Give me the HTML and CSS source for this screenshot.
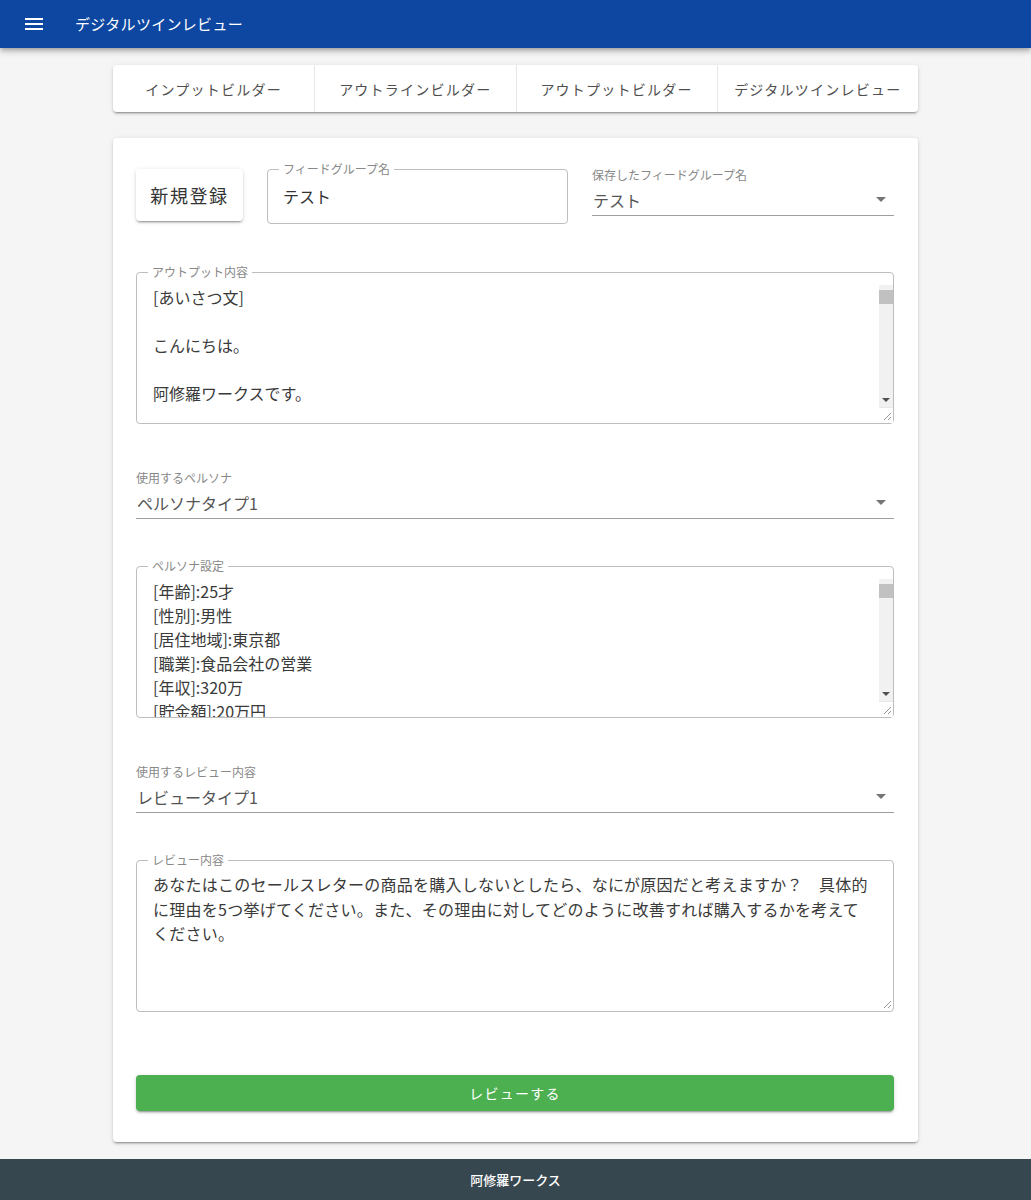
FILE: index.html
```html
<!DOCTYPE html>
<html lang="ja">
<head>
<meta charset="utf-8">
<title>デジタルツインレビュー</title>
<link rel="stylesheet" href="styles.css">
</head>
<body>
<header class="appbar">
  <span class="menu-icon">
    <svg width="18" height="12" viewBox="0 0 18 12"><rect x="0" y="0" width="18" height="2"/><rect x="0" y="5" width="18" height="2"/><rect x="0" y="10" width="18" height="2"/></svg>
  </span>
  <span class="app-title">デジタルツインレビュー</span>
</header>

<main class="page">
  <nav class="tabs">
    <a class="tab">インプットビルダー</a>
    <a class="tab">アウトラインビルダー</a>
    <a class="tab">アウトプットビルダー</a>
    <a class="tab">デジタルツインレビュー</a>
  </nav>

  <section class="card">
    <div class="row-top">
      <button class="btn-new">新規登録</button>
      <div class="outlined field-name">
        <span class="olabel">フィードグループ名</span>
        <span class="ovalue">テスト</span>
      </div>
      <div class="select select-top">
        <span class="slabel">保存したフィードグループ名</span>
        <div class="svalue"><span>テスト</span><i class="caret"></i></div>
      </div>
    </div>

    <div class="outlined area">
      <span class="olabel">アウトプット内容</span>
      <textarea class="area-text" readonly>[あいさつ文]

こんにちは。

阿修羅ワークスです。

本日はお忙しいところ、
ありがとうございます。</textarea>
      <div class="fake-scroll">
        <span class="sb-gap"></span>
        <span class="sb-thumb"></span>
        <span class="sb-fill"></span>
        <span class="sb-down"><i class="sb-arrow"></i></span>
        <span class="sb-resizer"><svg width="10" height="10" viewBox="0 0 10 10"><path d="M9 2 L2 9 M9 6 L6 9" stroke="#999" stroke-width="1" fill="none"/></svg></span>
      </div>
    </div>

    <div class="select select-gap">
      <span class="slabel">使用するペルソナ</span>
      <div class="svalue"><span>ペルソナタイプ1</span><i class="caret"></i></div>
    </div>

    <div class="outlined area">
      <span class="olabel">ペルソナ設定</span>
      <textarea class="area-text" readonly>[年齢]:25才
[性別]:男性
[居住地域]:東京都
[職業]:食品会社の営業
[年収]:320万
[貯金額]:20万円
[趣味]:映画鑑賞
[家族構成]:一人暮らし</textarea>
      <div class="fake-scroll">
        <span class="sb-gap"></span>
        <span class="sb-thumb"></span>
        <span class="sb-fill"></span>
        <span class="sb-down"><i class="sb-arrow"></i></span>
        <span class="sb-resizer"><svg width="10" height="10" viewBox="0 0 10 10"><path d="M9 2 L2 9 M9 6 L6 9" stroke="#999" stroke-width="1" fill="none"/></svg></span>
      </div>
    </div>

    <div class="select select-gap">
      <span class="slabel">使用するレビュー内容</span>
      <div class="svalue"><span>レビュータイプ1</span><i class="caret"></i></div>
    </div>

    <div class="outlined area">
      <span class="olabel">レビュー内容</span>
      <textarea class="area-text review-text" readonly>あなたはこのセールスレターの商品を購入しないとしたら、なにが原因だと考えますか？　具体的
に理由を5つ挙げてください。また、その理由に対してどのように改善すれば購入するかを考えて
ください。</textarea>
      <span class="corner-resizer"><svg width="10" height="10" viewBox="0 0 10 10"><path d="M9 2 L2 9 M9 6 L6 9" stroke="#999" stroke-width="1" fill="none"/></svg></span>
    </div>

    <button class="btn-review">レビューする</button>
  </section>
</main>

<footer class="footer">阿修羅ワークス</footer>
</body>
</html>
```

FILE: styles.css
```css
* { box-sizing: border-box; }

html, body {
  margin: 0;
  padding: 0;
}

body {
  background: #f5f5f5;
  font-family: "Noto Sans CJK JP", "Noto Sans", sans-serif;
  color: #333;
}

/* ---------- app bar ---------- */
.appbar {
  height: 48px;
  background: #0d47a1;
  display: flex;
  align-items: center;
  padding-left: 25px;
  box-shadow: 0 2px 4px -1px rgba(0,0,0,.2), 0 4px 5px 0 rgba(0,0,0,.14), 0 1px 10px 0 rgba(0,0,0,.12);
  position: relative;
  z-index: 2;
}

.menu-icon {
  display: flex;
  width: 18px;
  height: 12px;
  margin-right: 32px;
  fill: #fff;
}

.app-title {
  color: #fff;
  font-size: 15px;
  letter-spacing: 0.3px;
  line-height: 20px;
}

/* ---------- page ---------- */
.page {
  width: 805px;
  margin: 0 auto;
  padding-top: 17px;
}

.tabs {
  display: grid;
  grid-template-columns: repeat(4, 1fr);
  height: 47px;
  background: #fff;
  border-radius: 4px;
  box-shadow: 0 3px 1px -2px rgba(0,0,0,.2), 0 2px 2px 0 rgba(0,0,0,.14), 0 1px 5px 0 rgba(0,0,0,.12);
}

.tab {
  display: flex;
  align-items: center;
  justify-content: center;
  font-size: 14px;
  letter-spacing: 1.25px;
  color: #4f4f4f;
  border-left: 1px solid #e6e6e6;
}

.tab:first-child { border-left: none; }

.card {
  margin-top: 26px;
  background: #fff;
  border-radius: 4px;
  padding: 31px 24px 31px 23px;
  box-shadow: 0 3px 1px -2px rgba(0,0,0,.2), 0 2px 2px 0 rgba(0,0,0,.14), 0 1px 5px 0 rgba(0,0,0,.12);
}

/* ---------- top row ---------- */
.row-top {
  display: flex;
  align-items: flex-start;
  gap: 24px;
  height: 55px;
}

.btn-new {
  width: 107px;
  height: 52px;
  border: none;
  border-radius: 4px;
  background: #fff;
  font-family: inherit;
  font-size: 18px;
  letter-spacing: 1.6px;
  color: #333;
  padding: 0;
  box-shadow: 0 3px 1px -2px rgba(0,0,0,.2), 0 2px 2px 0 rgba(0,0,0,.14), 0 1px 5px 0 rgba(0,0,0,.12);
}

.outlined {
  position: relative;
  border: 1px solid #bdbdbd;
  border-radius: 4px;
  background: #fff;
}

.olabel {
  position: absolute;
  top: -8px;
  left: 11px;
  padding: 0 4px;
  background: #fff;
  font-size: 12px;
  line-height: 14px;
  color: #888;
}

.field-name {
  width: 301px;
  height: 55px;
  display: flex;
  align-items: center;
  padding-left: 15px;
}

.ovalue {
  font-size: 16px;
  line-height: 22px;
  color: #333;
  margin-top: -2px;
}

/* ---------- select ---------- */
.select {
  display: flex;
  flex-direction: column;
}

.select-top {
  flex: 1;
  margin-top: -1px;
}

.select-gap {
  margin-top: 47px;
}

.slabel {
  font-size: 12px;
  line-height: 14px;
  color: #888;
}

.svalue {
  display: flex;
  align-items: flex-start;
  justify-content: space-between;
  padding: 7px 0 4px 1px;
  border-bottom: 1px solid #9e9e9e;
  font-size: 16px;
  line-height: 22px;
  color: #555;
}

.caret {
  width: 0;
  height: 0;
  margin: 8px 8px 0 0;
  border-left: 5px solid transparent;
  border-right: 5px solid transparent;
  border-top: 5px solid #757575;
}

/* ---------- textarea ---------- */
.area {
  height: 152px;
  margin-top: 47px;
  padding-top: 12px;
}

.row-top + .area { margin-top: 48px; }

.area-text {
  display: block;
  width: 100%;
  height: 100%;
  border: none;
  outline: none;
  resize: none;
  overflow: hidden;
  padding: 0 20px 0 16px;
  margin: 0;
  background: transparent;
  font-family: "Noto Sans CJK JP", sans-serif;
  font-size: 16px;
  line-height: 24px;
  color: #3a3a3a;
  white-space: pre-wrap;
}

.review-text {
  letter-spacing: 0.25px;
  line-height: 24.5px;
  margin-top: -1px;
}

.fake-scroll {
  position: absolute;
  top: 12px;
  right: 0;
  bottom: 0;
  width: 14px;
  display: flex;
  flex-direction: column;
  background: #f1f1f1;
  border-bottom-right-radius: 3px;
}

.sb-gap { height: 5px; }

.sb-thumb {
  height: 14px;
  background: #c1c1c1;
}

.sb-fill { flex: 1; }

.sb-down {
  height: 14px;
  display: flex;
  align-items: center;
  justify-content: center;
}

.sb-arrow {
  width: 0;
  height: 0;
  border-left: 4px solid transparent;
  border-right: 4px solid transparent;
  border-top: 4px solid #505050;
}

.sb-resizer {
  height: 16px;
  background: #fff;
  display: flex;
  align-items: flex-end;
  justify-content: flex-end;
  padding: 0 1px 2px 0;
  border-top: 1px solid #e8e8e8;
}

.corner-resizer {
  position: absolute;
  right: 1px;
  bottom: 2px;
  display: flex;
}

/* ---------- review button ---------- */
.btn-review {
  display: block;
  width: 100%;
  height: 36px;
  margin-top: 63px;
  border: none;
  border-radius: 4px;
  background: #4caf50;
  color: #fff;
  font-family: inherit;
  font-size: 14px;
  letter-spacing: 1.25px;
  box-shadow: 0 3px 1px -2px rgba(0,0,0,.2), 0 2px 2px 0 rgba(0,0,0,.14), 0 1px 5px 0 rgba(0,0,0,.12);
}

/* ---------- footer ---------- */
.footer {
  margin-top: 17px;
  height: 41px;
  background: #37474f;
  color: #fff;
  font-size: 13px;
  font-weight: 500;
  display: flex;
  align-items: center;
  justify-content: center;
}
```
